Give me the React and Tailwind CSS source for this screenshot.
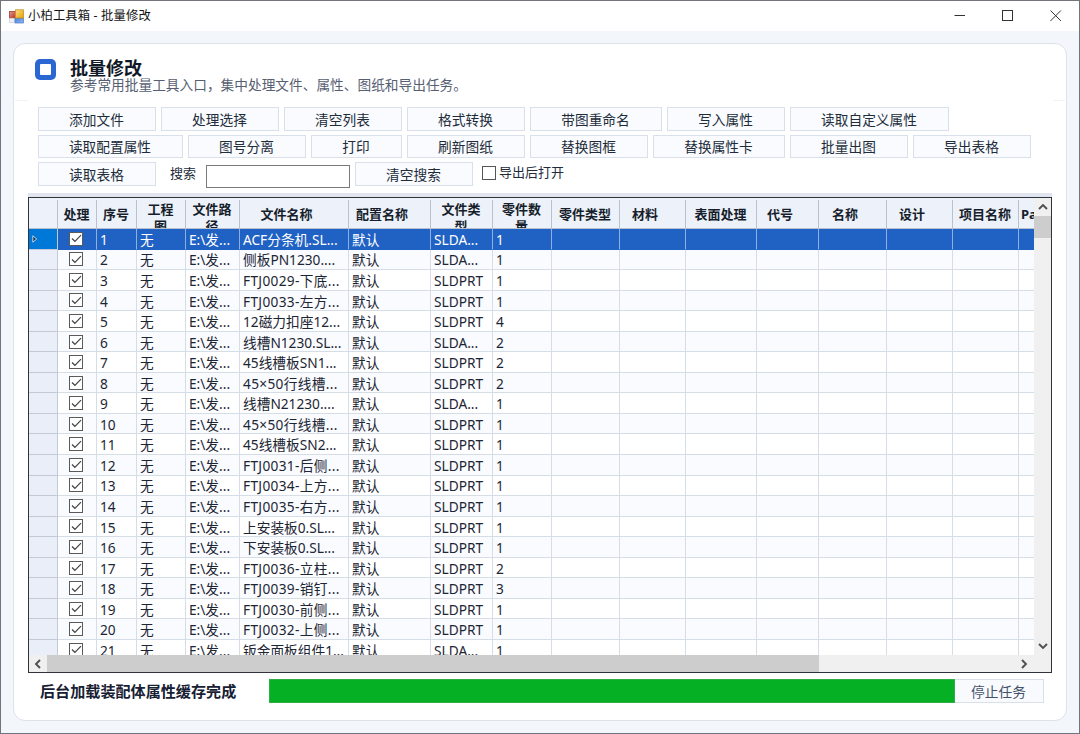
import React from 'react';

const FONT = "font-['Noto_Sans','Noto_Sans_CJK_SC',sans-serif]";

const TOOLS_1 = [
  ['添加文件', 'w-[118px]'],
  ['处理选择', 'w-[118px]'],
  ['清空列表', 'w-[118px]'],
  ['格式转换', 'w-[118px]'],
  ['带图重命名', 'w-[132px]'],
  ['写入属性', 'w-[118px]'],
  ['读取自定义属性', 'w-[159px]'],
];

const TOOLS_2 = [
  ['读取配置属性', 'w-[145px]'],
  ['图号分离', 'w-[118px]'],
  ['打印', 'w-[91px]'],
  ['刷新图纸', 'w-[118px]'],
  ['替换图框', 'w-[118px]'],
  ['替换属性卡', 'w-[132px]'],
  ['批量出图', 'w-[118px]'],
  ['导出表格', 'w-[118px]'],
];

const COLUMNS = [
  { title: '处理', width: 'w-[39px]' },
  { title: '序号', width: 'w-[40px]' },
  { title: '工程图', width: 'w-[49px]', wrap: 'w-[30px]' },
  { title: '文件路径', width: 'w-[54px]', wrap: 'w-[40px]' },
  { title: '文件名称', width: 'w-[109px]', sort: true },
  { title: '配置名称', width: 'w-[82px]', sort: true },
  { title: '文件类型', width: 'w-[62px]', wrap: 'w-[40px]' },
  { title: '零件数量', width: 'w-[59px]', wrap: 'w-[40px]' },
  { title: '零件类型', width: 'w-[68px]' },
  { title: '材料', width: 'w-[66px]', sort: true },
  { title: '表面处理', width: 'w-[71px]' },
  { title: '代号', width: 'w-[62px]', sort: true },
  { title: '名称', width: 'w-[68px]', sort: true },
  { title: '设计', width: 'w-[66px]', sort: true },
  { title: '项目名称', width: 'w-[66px]' },
];

const ROWS = [
  ['ACF分条机.SL...', 'SLDA...', 1],
  ['侧板PN1230....', 'SLDA...', 1],
  ['FTJ0029-下底...', 'SLDPRT', 1],
  ['FTJ0033-左方...', 'SLDPRT', 1],
  ['12磁力扣座12...', 'SLDPRT', 4],
  ['线槽N1230.SL...', 'SLDA...', 2],
  ['45线槽板SN1...', 'SLDPRT', 2],
  ['45×50行线槽...', 'SLDPRT', 2],
  ['线槽N21230....', 'SLDA...', 1],
  ['45×50行线槽...', 'SLDPRT', 1],
  ['45线槽板SN2...', 'SLDPRT', 1],
  ['FTJ0031-后侧...', 'SLDPRT', 1],
  ['FTJ0034-上方...', 'SLDPRT', 1],
  ['FTJ0035-右方...', 'SLDPRT', 1],
  ['上安装板0.SL...', 'SLDPRT', 1],
  ['下安装板0.SL...', 'SLDPRT', 1],
  ['FTJ0036-立柱...', 'SLDPRT', 2],
  ['FTJ0039-销钉...', 'SLDPRT', 3],
  ['FTJ0030-前侧...', 'SLDPRT', 1],
  ['FTJ0032-上侧...', 'SLDPRT', 1],
  ['钣金面板组件1...', 'SLDA...', 1],
];

function ToolButton({ label, width, height = 'h-6 pt-0.5' }) {
  return (
    <button
      className={`${width} ${height} flex shrink-0 items-center justify-center whitespace-nowrap border border-[#dae0ea] bg-[#f9fbfe] pr-px text-[13.7px] leading-none text-[#222b3a]`}
    >
      {label}
    </button>
  );
}

function Chevron({ d }) {
  return (
    <svg width="10" height="10" viewBox="0 0 10 10" fill="none" stroke="#505050" strokeWidth="1.9">
      <path d={d} />
    </svg>
  );
}

function TitleBar() {
  return (
    <header className="flex h-[30px] shrink-0 items-center bg-white pl-2">
      <svg width="15" height="15" viewBox="0 0 15 15">
        <defs>
          <linearGradient id="red" x1="0" y1="0" x2="1" y2="1">
            <stop offset="0" stopColor="#e39a8c" />
            <stop offset="1" stopColor="#b8302c" />
          </linearGradient>
          <linearGradient id="gold" x1="0" y1="0" x2="1" y2="1">
            <stop offset="0" stopColor="#ffe08a" />
            <stop offset="1" stopColor="#e5a000" />
          </linearGradient>
          <linearGradient id="blue" x1="0" y1="0" x2="1" y2="1">
            <stop offset="0" stopColor="#4a7fdc" />
            <stop offset="1" stopColor="#8fb8f5" />
          </linearGradient>
        </defs>
        <rect x="0.5" y="2.5" width="6" height="6.5" fill="url(#red)" stroke="#b5524c" />
        <rect x="0.5" y="9.5" width="5" height="4" fill="#eef0f2" stroke="#c9cdd2" strokeWidth="0.7" />
        <rect x="6" y="9" width="8.5" height="5" fill="url(#blue)" stroke="#4b79c8" strokeWidth="0.7" />
        <rect x="6.5" y="0.8" width="8" height="8.2" fill="url(#gold)" stroke="#c79222" strokeWidth="0.8" />
      </svg>
      <span className="ml-1 text-[12.3px] leading-none tracking-[0.15px] text-[#151515]">小柏工具箱 - 批量修改</span>
      <div className="ml-auto flex items-center text-[#333333]">
        <svg width="12" height="12" viewBox="0 0 12 12" fill="none" stroke="currentColor" className="mr-9">
          <path d="M.5 5.500h10.500" />
        </svg>
        <svg width="12" height="12" viewBox="0 0 12 12" fill="none" stroke="currentColor" className="mr-9">
          <rect x="0.5" y="0.5" width="10" height="10" />
        </svg>
        <svg width="12" height="12" viewBox="0 0 12 12" fill="none" stroke="currentColor" className="mr-[17px]">
          <path d="M.5 .5l10.400 10.400M10.900 .5L.5 10.900" />
        </svg>
      </div>
    </header>
  );
}

function Toolbar() {
  return (
    <div className="flex flex-col pl-6">
      <div className="flex h-7 gap-[5px]">
        {TOOLS_1.map(([label, width]) => (
          <ToolButton key={label} label={label} width={width} />
        ))}
      </div>
      <div className="flex h-[27px] gap-[5px]">
        {TOOLS_2.map(([label, width]) => (
          <ToolButton key={label} label={label} width={width} height="h-[23px] pt-px" />
        ))}
      </div>
      <div className="flex h-[31px] items-start">
        <ToolButton label="读取表格" width="w-[118px]" />
        <span className="ml-[14px] mt-[5px] w-9 text-[13px] leading-none text-[#222b3a]">搜索</span>
        <input className="mt-[3px] h-[23px] w-36 border border-[#7a7a7a] bg-white outline-none" />
        <div className="ml-[5px]">
          <ToolButton label="清空搜索" width="w-[118px]" />
        </div>
        <span className="ml-[9px] mt-1 h-[14px] w-[14px] border border-[#555555] bg-white" />
        <span className="ml-[3px] mt-1 text-[13px] leading-none text-[#222b3a]">导出后打开</span>
      </div>
    </div>
  );
}

function HeaderCell({ title, width, wrap, sort }) {
  return (
    <div
      className={`${width} ${sort ? 'pr-[15px]' : 'pr-px'} ${
        wrap ? 'items-start' : 'items-center whitespace-nowrap'
      } flex shrink-0 justify-center overflow-hidden border-r border-[#b9c1cc] text-center text-[13px] font-bold leading-[17px] text-[#161e2c]`}
    >
      <span className={wrap ? `${wrap} mt-px` : ''}>{title}</span>
    </div>
  );
}

function Row({ index, name, type, count }) {
  const selected = index === 0;
  const values = [null, index + 1, '无', 'E:\\发...', name, '默认', type, count];
  const loose = name.startsWith('FTJ') || name.includes('×');
  return (
    <div
      className={`flex h-[20.55px] shrink-0 ${
        selected ? 'bg-[#2062c4] text-white' : index % 2 ? 'bg-[#f9fbff] text-[#1c2534]' : 'bg-white text-[#1c2534]'
      }`}
    >
      <div
        className={`flex w-[29px] shrink-0 items-center border-b border-r border-[#c3cad5] pl-[3px] ${
          selected ? 'bg-[#0078d7]' : 'bg-[#e9eef8]'
        }`}
      >
        {selected && (
          <svg width="6" height="8" viewBox="0 0 6 8">
            <path d="M.8 .8v6.400L4.700 4z" fill="#1d3550" stroke="#cfe4f7" strokeWidth="0.9" />
          </svg>
        )}
      </div>
      {COLUMNS.map((column, i) => (
        <div
          key={column.title}
          className={`${column.width} flex shrink-0 items-center overflow-hidden whitespace-nowrap border-b border-r pl-[3px] text-[13.7px] leading-none ${
            selected ? 'border-b-[#2062c4] border-r-[#8fb0de]' : 'border-[#d5dde7]'
          }`}
        >
          {i === 0 ? (
            <span className="ml-2 flex h-[14px] w-[14px] shrink-0 items-center justify-center border border-[#5a5a5a] bg-white">
              <svg width="11" height="9" viewBox="0 0 11 9" fill="none" stroke="#444444" strokeWidth="1.2">
                <path d="M1 4.500l2.900 2.800L10 1.200" />
              </svg>
            </span>
          ) : (
            <span className={`mt-0.5 ${i === 4 && loose ? 'tracking-[0.32px]' : ''}`}>{values[i]}</span>
          )}
        </div>
      ))}
      <div className={`grow border-b ${selected ? 'border-[#2062c4]' : 'border-[#d5dde7]'}`} />
    </div>
  );
}

function Grid() {
  return (
    <div className="ml-[14px] w-[1024px] shrink-0 border-t-4 border-[#e1e5ef]">
      <div className="flex h-[476px] flex-col border border-[#30343a] bg-white">
        <div className="flex h-[457px] shrink-0">
          <div className="flex w-[1005px] shrink-0 flex-col overflow-hidden">
            <div className="flex h-[31px] shrink-0 border-b border-[#b9c1cc] bg-[#edf1f9] pt-0.5">
              <div className="w-[29px] shrink-0 border-r border-[#b9c1cc]" />
              {COLUMNS.map((column) => (
                <HeaderCell key={column.title} {...column} />
              ))}
              <div className="flex items-center overflow-hidden pl-[2px] text-[13px] font-bold leading-none text-[#161e2c]">
                Pa
              </div>
            </div>
            {ROWS.map(([name, type, count], index) => (
              <Row key={index} index={index} name={name} type={type} count={count} />
            ))}
          </div>
          <div className="flex grow flex-col items-center bg-[#f0f0f0]">
            <div className="flex h-[18px] items-center">
              <Chevron d="M1 7l4-4 4 4" />
            </div>
            <div className="h-[22px] w-full bg-[#cdcdcd]" />
            <div className="mt-auto flex h-[19px] items-center">
              <Chevron d="M1 3l4 4 4-4" />
            </div>
          </div>
        </div>
        <div className="flex grow items-center bg-[#f0f0f0]">
          <div className="flex w-[18px] justify-center">
            <Chevron d="M7 1L3 5l4 4" />
          </div>
          <div className="h-full w-[772px] bg-[#cdcdcd]" />
          <div className="ml-auto mr-[22px]">
            <Chevron d="M3 1l4 4-4 4" />
          </div>
        </div>
      </div>
    </div>
  );
}

export default function App() {
  return (
    <div className={`${FONT} flex h-[734px] w-[1080px] flex-col overflow-hidden border border-[#73757d] bg-[#f3f6fb]`}>
      <TitleBar />
      <main className="ml-3 mt-3 flex h-[678px] w-[1054px] shrink-0 flex-col rounded-[12px] border border-[#dbe2ea] bg-white">
        <div className="flex h-14 shrink-0 pl-[21px] pt-[15px]">
          <div className="flex h-[21px] w-[21px] items-center justify-center rounded-[5px] bg-[#2a67d3]">
            <div className="h-[11px] w-[11px] rounded-[1px] bg-white" />
          </div>
          <div className="ml-[14px] flex flex-col">
            <h1 className="text-[18px] font-bold leading-[19px] text-[#111827]">批量修改</h1>
            <p className="text-[13.7px] leading-[14px] text-[#566072]">
              参考常用批量工具入口，集中处理文件、属性、图纸和导出任务。
            </p>
          </div>
        </div>
        <div className="mb-[6px] flex h-px shrink-0 justify-between px-px">
          <div className="w-[13px] bg-[#f0f3f7]" />
          <div className="w-3 bg-[#f0f3f7]" />
        </div>
        <Toolbar />
        <Grid />
        <div className="mt-1.5 flex h-6 items-center pl-[25px]">
          <span className="w-[230px] pl-px pt-0.5 text-[15.1px] font-bold leading-none text-[#172033]">
            后台加载装配体属性缓存完成
          </span>
          <div className="h-6 w-[686px] border border-[#2fae46] bg-[#06b025]" />
          <button className="flex h-6 w-[89px] items-center justify-center border border-l-0 border-[#dae0ea] bg-[#f8fafd] pr-px pt-px text-[13.7px] leading-none text-[#43516a]">
            停止任务
          </button>
        </div>
      </main>
    </div>
  );
}
